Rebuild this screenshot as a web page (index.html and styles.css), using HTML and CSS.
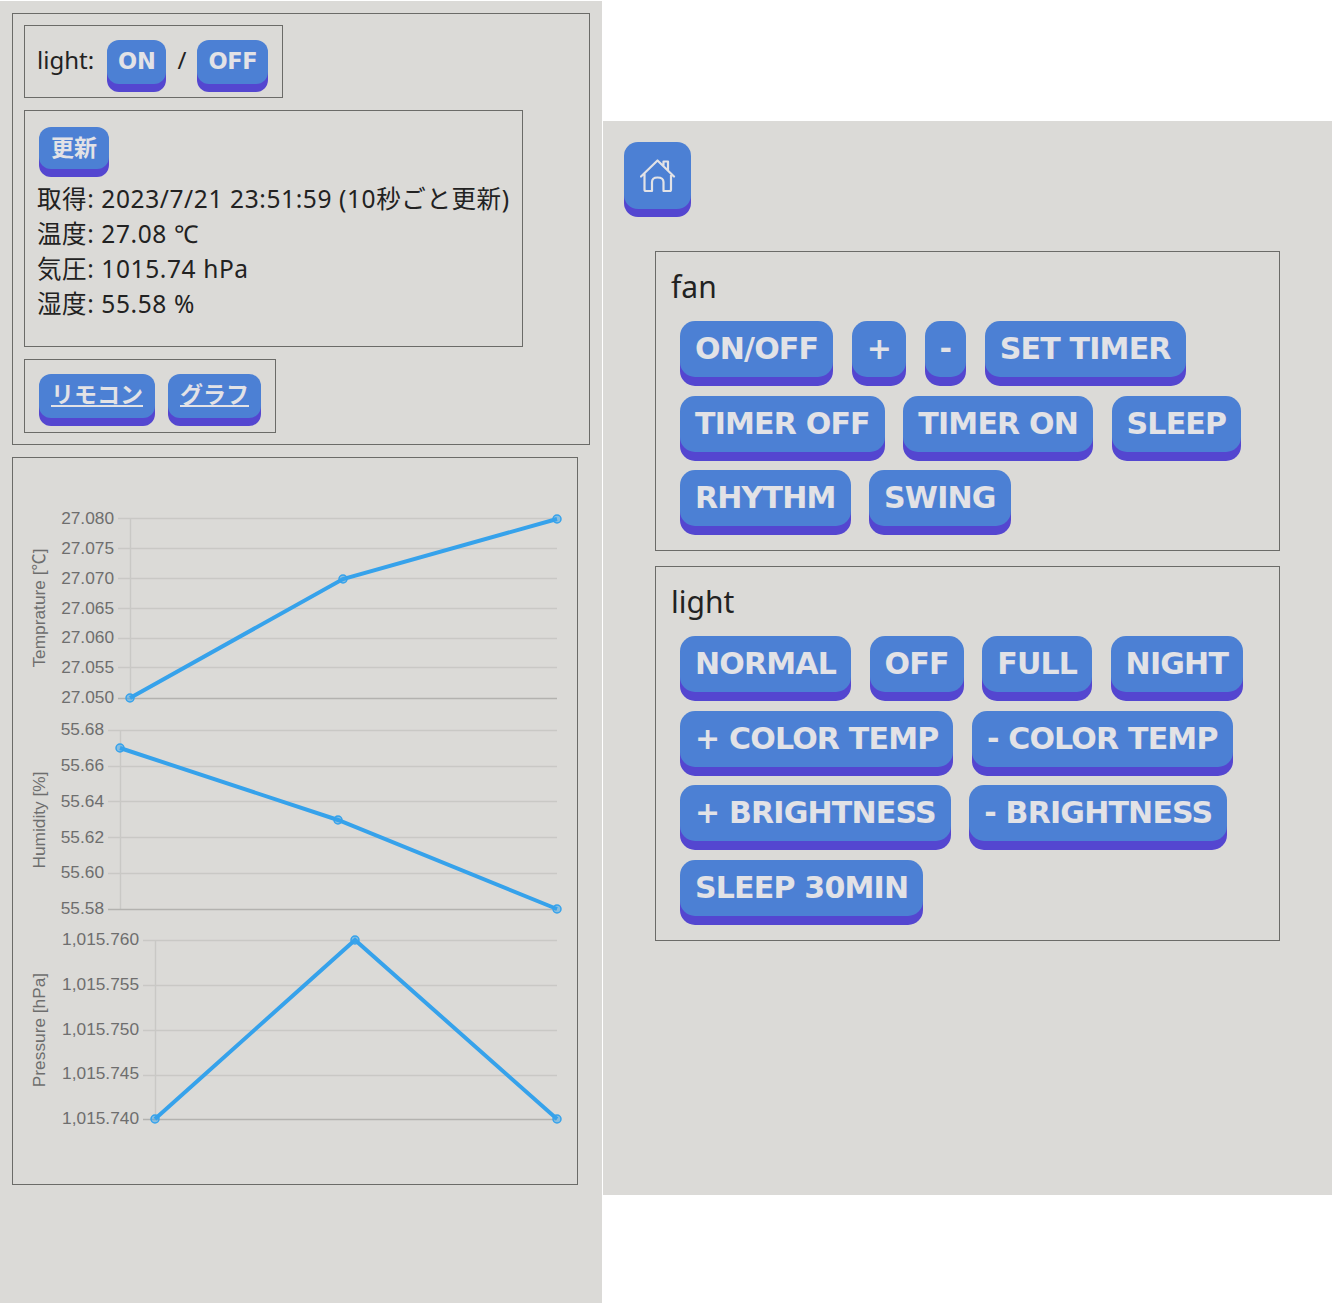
FILE: index.html
```html
<!DOCTYPE html>
<html lang="ja">
<head>
    <meta charset="UTF-8">
    <meta name="viewport" content="width=device-width, initial-scale=1.0">
    <title>Remote</title>
    <link rel="stylesheet" href="styles.css">
</head>
<body>
    <div class="panel panel-left">
        <div class="box box-outer">
            <div class="box box-light">
                <span>light:</span>
                <button class="btn btn-small">ON</button>
                <span>/</span>
                <button class="btn btn-small">OFF</button>
            </div>
            <div class="box box-status">
                <button class="btn btn-small btn-jp btn-update">更新</button>
                <p>取得: 2023/7/21 23:51:59 (10秒ごと更新)</p>
                <p>温度: 27.08 ℃</p>
                <p>気圧: 1015.74 hPa</p>
                <p>湿度: 55.58 %</p>
            </div>
            <div class="box box-links">
                <a class="btn btn-small btn-jp" href="#">リモコン</a>
                <a class="btn btn-small btn-jp" href="#">グラフ</a>
            </div>
        </div>
        <div class="box box-chart">
            <svg class="chart" width="564" height="726" viewBox="13 458 564 726">
                <g class="grid">
                    <path d="M118 518.5H557M118 548.5H557M118 578.5H557M118 608.5H557M118 638.5H557M118 667.5H557M130.5 518V698"/>
                    <path d="M108 730.5H557M108 766.5H557M108 801.5H557M108 837.5H557M108 873.5H557M120.5 730V909"/>
                    <path d="M143 940.5H557M143 985.5H557M143 1030.5H557M143 1075.5H557M155.5 940V1119"/>
                </g>
                <g class="axis">
                    <path d="M118 698.5H557M108 909.5H557M143 1119.5H557"/>
                </g>
                <g class="ticks">
                    <text x="114" y="524">27.080</text>
                    <text x="114" y="554">27.075</text>
                    <text x="114" y="584">27.070</text>
                    <text x="114" y="614">27.065</text>
                    <text x="114" y="643">27.060</text>
                    <text x="114" y="673">27.055</text>
                    <text x="114" y="703">27.050</text>
                    <text x="104" y="735">55.68</text>
                    <text x="104" y="771">55.66</text>
                    <text x="104" y="807">55.64</text>
                    <text x="104" y="843">55.62</text>
                    <text x="104" y="878">55.60</text>
                    <text x="104" y="914">55.58</text>
                    <text x="139" y="945">1,015.760</text>
                    <text x="139" y="990">1,015.755</text>
                    <text x="139" y="1035">1,015.750</text>
                    <text x="139" y="1079">1,015.745</text>
                    <text x="139" y="1124">1,015.740</text>
                </g>
                <g class="titles">
                    <text transform="translate(45 608) rotate(-90)">Temprature [℃]</text>
                    <text transform="translate(45 820) rotate(-90)">Humidity [%]</text>
                    <text transform="translate(45 1030) rotate(-90)">Pressure [hPa]</text>
                </g>
                <g class="series">
                    <polyline points="130,698 343,579 557,519"/>
                    <polyline points="120,748 338,820 557,909"/>
                    <polyline points="155,1119 355,940 557,1119"/>
                </g>
                <g class="points">
                    <circle cx="130" cy="698" r="4"/><circle cx="343" cy="579" r="4"/><circle cx="557" cy="519" r="4"/>
                    <circle cx="120" cy="748" r="4"/><circle cx="338" cy="820" r="4"/><circle cx="557" cy="909" r="4"/>
                    <circle cx="155" cy="1119" r="4"/><circle cx="355" cy="940" r="4"/><circle cx="557" cy="1119" r="4"/>
                </g>
            </svg>
        </div>
    </div>

    <div class="panel panel-right">
        <button class="btn btn-home" aria-label="home">
            <svg width="36" height="34" viewBox="0 0 36 34">
                <path d="M1 17.5L17.500 1.500L34 17.500M4.500 14.500V30.500Q4.500 32 6 32H12V23Q12 18.500 17.500 18.500Q23.500 18.500 23.500 23V32H29.500Q31 32 31 30.500V14.500M23.500 6.500V2.500H28V11"/>
            </svg>
        </button>
        <div class="box box-remote">
            <h2>fan</h2>
            <div class="btn-row">
                <button class="btn">ON/OFF</button>
                <button class="btn">+</button>
                <button class="btn">-</button>
                <button class="btn">SET TIMER</button>
                <button class="btn">TIMER OFF</button>
                <button class="btn">TIMER ON</button>
                <button class="btn">SLEEP</button>
                <button class="btn">RHYTHM</button>
                <button class="btn">SWING</button>
            </div>
        </div>
        <div class="box box-remote">
            <h2>light</h2>
            <div class="btn-row">
                <button class="btn">NORMAL</button>
                <button class="btn">OFF</button>
                <button class="btn">FULL</button>
                <button class="btn">NIGHT</button>
                <button class="btn">+ COLOR TEMP</button>
                <button class="btn">- COLOR TEMP</button>
                <button class="btn">+ BRIGHTNESS</button>
                <button class="btn">- BRIGHTNESS</button>
                <button class="btn">SLEEP 30MIN</button>
            </div>
        </div>
    </div>
</body>
</html>
```
FILE: styles.css
```css
body {
    display: flex;
    align-items: flex-start;
    margin: 0;
    background-color: white;
    color: #222;
    font-family: "Noto Sans", "Noto Sans CJK JP", sans-serif;
    font-size: 24px;
    line-height: 35px;
}

.panel {
    background-color: #dbdad7;
    box-sizing: border-box;
}

.panel-left {
    width: 602px;
    height: 1302px;
    margin-top: 1px;
    padding: 12px;
}

.panel-right {
    flex: 1;
    height: 1074px;
    margin-top: 121px;
    margin-left: 1px;
    padding: 21px;
}

.box {
    border: 1px solid #6b6b68;
    box-sizing: border-box;
}

.box-outer {
    display: flex;
    flex-direction: column;
    align-items: flex-start;
    gap: 12px;
    width: 578px;
    padding: 11px;
}

.box-light {
    display: flex;
    align-items: center;
    height: 73px;
    padding: 0 14px 0 12px;
}

.box-light span {
    margin-bottom: 4px;
}

.box-light span:first-child {
    margin-right: 13px;
}

.box-light span:nth-child(3) {
    margin-left: 11px;
    margin-right: 11px;
}

.box-status {
    width: 499px;
    height: 237px;
    padding: 16px 12px 0;
    font-size: 24.500px;
    letter-spacing: 0.6px;
}

.box-status p {
    margin: 0;
}

.box-links {
    display: flex;
    gap: 13px;
    padding: 14px 14px 14px 14px;
}

.box-chart {
    width: 566px;
    height: 728px;
    margin-top: 12px;
}

.chart {
    display: block;
}

.btn {
    display: inline-block;
    padding: 0 15px;
    height: 56px;
    border: none;
    border-radius: 15px;
    box-shadow: 0 9px 0 #5446d0;
    background-color: #4c80d4;
    color: #e2e2e6;
    font-family: "DejaVu Sans", "Noto Sans CJK JP", sans-serif;
    font-size: 30px;
    font-weight: bold;
    letter-spacing: -0.8px;
    line-height: 48px;
    cursor: pointer;
}

.btn-small {
    height: 44px;
    padding: 0 11px;
    border-radius: 12px;
    box-shadow: 0 8px 0 #5446d0;
    font-size: 22.500px;
    letter-spacing: -0.3px;
    line-height: 35px;
}

.btn-jp {
    padding: 0 12px;
    font-size: 23px;
    letter-spacing: 0;
    line-height: 42px;
}

.btn-update {
    display: block;
    height: 42px;
    margin-bottom: 11.500px;
    margin-left: 2px;
    line-height: 34px;
}

.btn-home {
    display: flex;
    align-items: center;
    justify-content: center;
    width: 67px;
    height: 67px;
    padding: 0;
    border-radius: 14px;
    box-shadow: 0 8px 0 #5446d0;
}

.btn-home path {
    fill: none;
    stroke: #e2e2e6;
    stroke-width: 2.200;
    stroke-linejoin: round;
    stroke-linecap: round;
}

.box-remote {
    width: 625px;
    margin-top: 42px;
    margin-left: 31px;
    padding: 15px 15px 15px;
}

.box-remote + .box-remote {
    margin-top: 15px;
}

.box-remote h2 {
    margin: 0 0 14px;
    font-size: 30px;
    font-weight: normal;
    line-height: 40px;
}

.btn-row {
    display: flex;
    flex-wrap: wrap;
    gap: 18.500px;
    margin-left: 9px;
    padding-bottom: 9px;
}

.grid path {
    fill: none;
    stroke: #c9c8c5;
    stroke-width: 1.400;
}

.axis path {
    fill: none;
    stroke: #b3b2af;
    stroke-width: 1.400;
}

.ticks text {
    fill: #6e6e6e;
    font-family: "Liberation Sans", sans-serif;
    font-size: 17.300px;
    text-anchor: end;
}

.titles text {
    fill: #6e6e6e;
    font-family: "Liberation Sans", "Noto Sans CJK JP", sans-serif;
    font-size: 17.300px;
    text-anchor: middle;
}

.series polyline {
    fill: none;
    stroke: #36a2eb;
    stroke-width: 4;
}

.points circle {
    fill: rgba(54, 162, 235, 0.5);
    stroke: #36a2eb;
    stroke-width: 1.500;
}
```
